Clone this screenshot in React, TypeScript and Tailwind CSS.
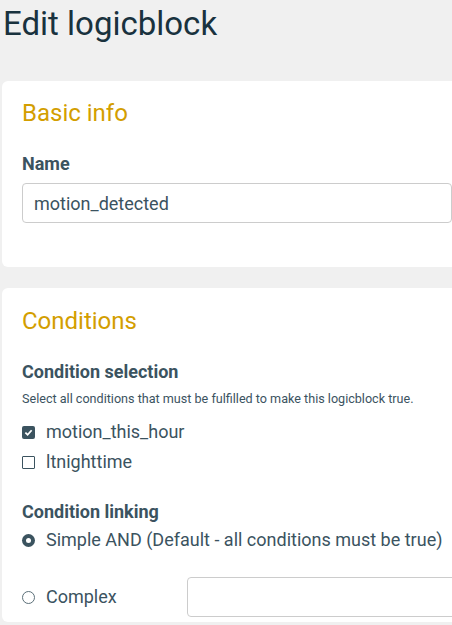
import React from "react";

const font = { fontFamily: "Roboto, 'Liberation Sans', sans-serif" };

function Check({ checked }: { checked: boolean }) {
  return checked ? (
    <span className="w-[13px] h-[13px] bg-[#3b535f] flex items-center justify-center rounded-[2px] shrink-0">
      <svg width="9" height="9" viewBox="0 0 10 10">
        <path d="M1.5 5.2 L4 7.5 L8.5 2.5" stroke="white" strokeWidth="2" fill="none" />
      </svg>
    </span>
  ) : (
    <span className="w-[13px] h-[13px] border border-[#3b535f] bg-white rounded-[1px] shrink-0" />
  );
}

function Radio({ checked }: { checked: boolean }) {
  return checked ? (
    <span className="w-[13px] h-[13px] rounded-full bg-[#3b535f] flex items-center justify-center shrink-0">
      <span className="w-[5px] h-[5px] rounded-full bg-white" />
    </span>
  ) : (
    <span className="w-[13px] h-[13px] rounded-full border border-[#5b6f78] bg-white shrink-0" />
  );
}

export default function App() {
  return (
    <div className="w-[452px] h-[625px] overflow-hidden bg-[#f0f0f0]" style={font}>
      <div className="w-[472px] pl-[2px]">
        <h1 className="text-[33px] leading-[38px] text-[#19323e] pt-[5px] pl-[1px]">Edit logicblock</h1>
        <div className="mt-[38px] bg-white rounded-[6px] px-[20px] pt-[18px] pb-[44px]">
          <h2 className="text-[24px] leading-[29px] text-[#d39e00]">Basic info</h2>
          <div className="mt-[24px] text-[18px] leading-[24px] font-bold text-[#3b535f]">Name</div>
          <div className="mt-[7px] h-[40px] border border-[#cccccc] rounded-[4px] flex items-center px-[11px] text-[18px] text-[#3b535f]">
            motion_detected
          </div>
        </div>
        <div className="mt-[21px] bg-white rounded-[6px] px-[20px] pt-[19px] pb-[5px] overflow-hidden">
          <h2 className="text-[24px] leading-[29px] text-[#d39e00]">Conditions</h2>
          <div className="mt-[24px] text-[18px] leading-[24px] font-bold text-[#3b535f]">Condition selection</div>
          <div className="mt-[6px] text-[12.6px] leading-[18px] text-[#3b535f]">
            Select all conditions that must be fulfilled to make this logicblock true.
          </div>
          <div className="mt-[9px] flex flex-col">
            <div className="h-[30px] flex items-center gap-[11px] text-[18px] leading-[30px] text-[#3b535f]">
              <Check checked={true} />
              <span>motion_this_hour</span>
            </div>
            <div className="h-[30px] flex items-center gap-[11px] text-[18px] leading-[30px] text-[#3b535f]">
              <Check checked={false} />
              <span>ltnighttime</span>
            </div>
          </div>
          <div className="mt-[23px] text-[18px] leading-[24px] font-bold text-[#3b535f]">Condition linking</div>
          <div className="mt-[1px] h-[30px] flex items-center gap-[11px] text-[18px] leading-[30px] text-[#3b535f]">
            <Radio checked={true} />
            <span>Simple AND (Default - all conditions must be true)</span>
          </div>
          <div className="mt-[22px] flex items-center text-[18px] leading-[40px] text-[#3b535f]">
            <div className="w-[165px] shrink-0 flex items-center gap-[11px]">
              <Radio checked={false} />
              <span>Complex</span>
            </div>
            <div className="w-[320px] shrink-0 h-[40px] border border-[#cccccc] rounded-[4px] bg-white" />
          </div>
        </div>
      </div>
    </div>
  );
}
